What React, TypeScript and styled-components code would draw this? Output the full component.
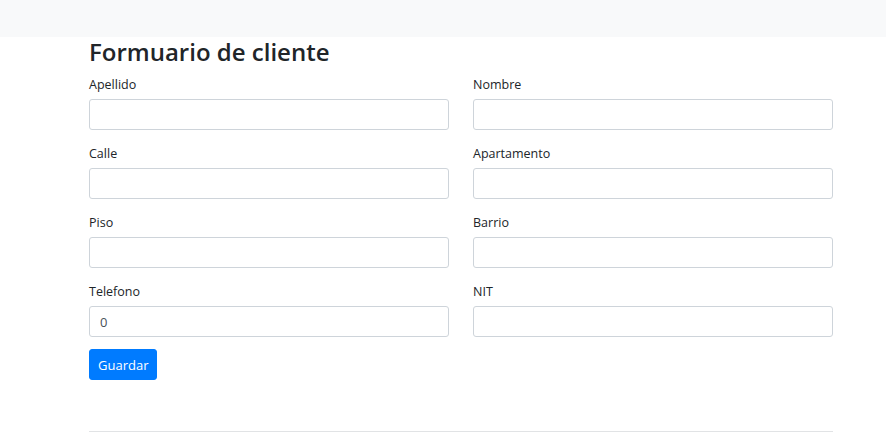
import React from "react";
import styled, { createGlobalStyle } from "styled-components";

const Global = createGlobalStyle`
  html, body { margin: 0; padding: 0; background: #fff; }
  body { font-family: "Segoe UI", "Open Sans", "Noto Sans", sans-serif; color: #212529; }
  * { box-sizing: border-box; }
`;

const NavBar = styled.div`
  height: 37px;
  background: #f8f9fa;
`;

const Container = styled.main`
  width: 744px;
  margin-left: 89px;
`;

const Title = styled.h3`
  margin: 1px 0 7px;
  font-size: 24px;
  line-height: 28px;
  font-weight: 600;
  color: #212529;
`;

const Grid = styled.div`
  display: grid;
  grid-template-columns: 1fr 1fr;
  column-gap: 24px;
`;

const Group = styled.div`
  display: flex;
  flex-direction: column;
  margin-bottom: 12px;
`;

const Label = styled.label`
  font-size: 12.5px;
  line-height: 20px;
  padding-top: 2px;
  margin-bottom: 4px;
  color: #212529;
`;

const Input = styled.input`
  height: 31px;
  width: 100%;
  border: 1px solid #ced4da;
  border-radius: 3px;
  padding: 0 10px;
  font-family: inherit;
  font-size: 13px;
  color: #495057;
  background: #fff;
  outline: none;
`;

const Button = styled.button`
  height: 31px;
  padding: 0 8px;
  border: 1px solid #007bff;
  border-radius: 3px;
  background: #007bff;
  color: #fff;
  font-family: inherit;
  font-size: 13px;
  cursor: pointer;
`;

const Divider = styled.hr`
  margin: 51px 0 0;
  border: 0;
  border-top: 1px solid #e1e3e5;
`;

const fields: { label: string; value?: string }[] = [
  { label: "Apellido" },
  { label: "Nombre" },
  { label: "Calle" },
  { label: "Apartamento" },
  { label: "Piso" },
  { label: "Barrio" },
  { label: "Telefono", value: "0" },
  { label: "NIT" },
];

export default function App() {
  return (
    <>
      <Global />
      <NavBar />
      <Container>
        <Title>Formuario de cliente</Title>
        <Grid>
          {fields.map((f) => (
            <Group key={f.label}>
              <Label>{f.label}</Label>
              <Input defaultValue={f.value ?? ""} />
            </Group>
          ))}
        </Grid>
        <Button>Guardar</Button>
        <Divider />
      </Container>
    </>
  );
}
